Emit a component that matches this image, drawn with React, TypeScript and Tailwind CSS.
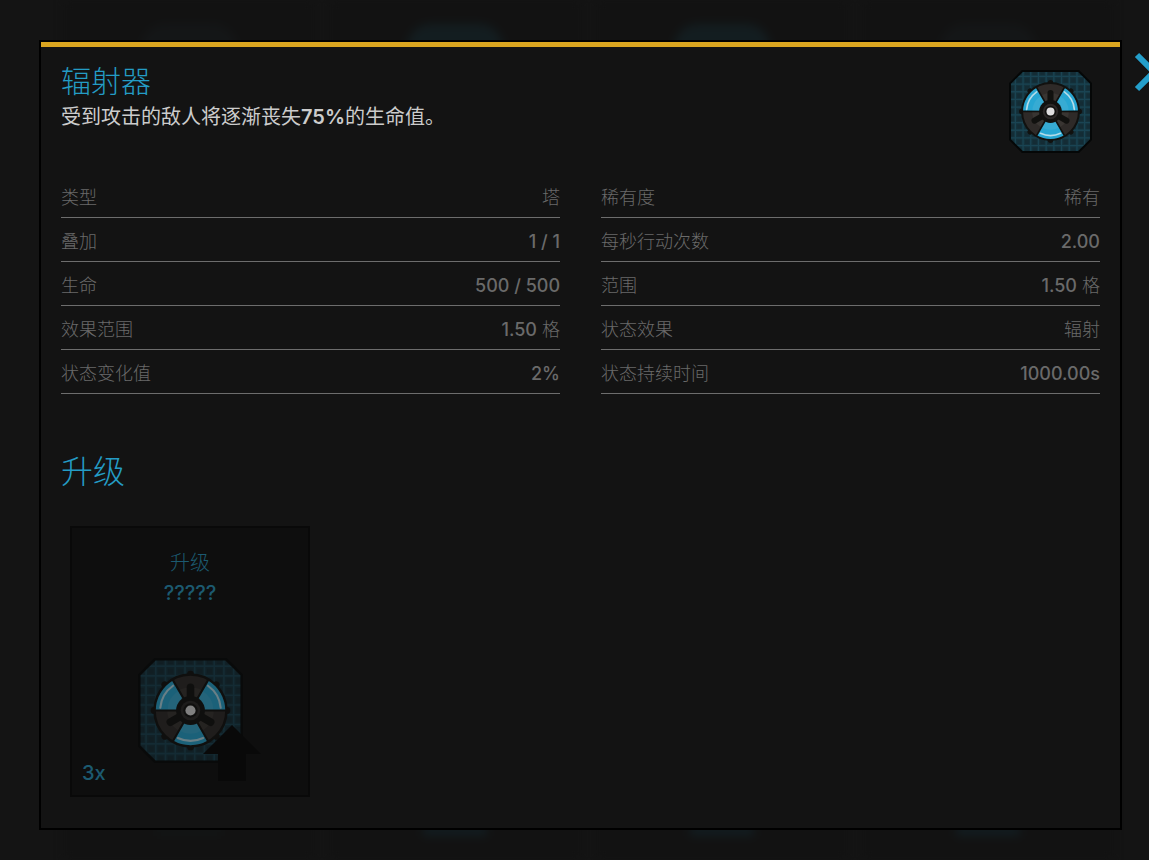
import React, { useId } from 'react';
import clsx from 'clsx';

interface Stat {
  label: string;
  amount?: string;
  text?: string;
}

const STATS: Stat[] = [
  { label: '类型', text: '塔' },
  { label: '稀有度', text: '稀有' },
  { label: '叠加', amount: '1 / 1' },
  { label: '每秒行动次数', amount: '2.00' },
  { label: '生命', amount: '500 / 500' },
  { label: '范围', amount: '1.50', text: '格' },
  { label: '效果范围', amount: '1.50', text: '格' },
  { label: '状态效果', text: '辐射' },
  { label: '状态变化值', amount: '2%' },
  { label: '状态持续时间', amount: '1000.00s' },
];

const GRID_LINES = [-4, 19, 42, 65, 88, 111, 134, 157, 180, 203, 226];
const KNOBS = [0, 45, 90, 135, 180, 225, 270, 315];
const BLADES = [0, 120, 240];

const OCTAGON = 'M40 3H208L245 40V208L208 245H40L3 208V40Z';

const RadiatorIcon: React.FC<{ className?: string }> = ({ className }) => {
  const clipId = useId();

  return (
    <svg viewBox="0 0 248 248" className={className} aria-hidden="true">
      <clipPath id={clipId}>
        <path d={OCTAGON} />
      </clipPath>
      <g clipPath={`url(#${clipId})`}>
        <rect width="248" height="248" fill="#15323c" />
        {GRID_LINES.map((x) =>
          GRID_LINES.map((y) => (
            <rect key={`${x}-${y}`} x={x + 6} y={y + 6} width="12" height="12" fill="#142c35" />
          )),
        )}
        {GRID_LINES.map((p) => (
          <path key={p} d={`M${p} 0V248M0 ${p}H248`} stroke="#1a4453" strokeWidth="4" />
        ))}
      </g>
      <path d={OCTAGON} fill="none" stroke="#050707" strokeWidth="6" />

      {/* Rotor */}
      {KNOBS.map((angle) => (
        <circle key={angle} cx="124" cy="38" r="8" fill="#11110f" transform={`rotate(${angle} 124 124)`} />
      ))}
      <circle cx="124" cy="124" r="85" fill="#2e2a28" stroke="#11110f" strokeWidth="6" />
      <circle cx="124" cy="124" r="55" fill="#393532" />
      {BLADES.map((angle) => (
        <g key={angle} transform={`rotate(${angle} 124 124)`}>
          <path d="M124 124L83 195A82 82 0 0 0 165 195Z" fill="#27a6d2" />
          <path d="M124 124L97 171A54 54 0 0 0 151 171Z" fill="#37abd3" />
          <path d="M124 124L82 197M124 124L166 197" stroke="#11110f" strokeWidth="5" />
          <path d="M94 189A72 72 0 0 0 154 189" fill="none" stroke="#b5dce8" strokeWidth="5" strokeLinecap="round" />
        </g>
      ))}
      {BLADES.map((angle) => (
        <path
          key={angle}
          d="M124 124V69"
          stroke="#11110f"
          strokeWidth="18"
          strokeLinecap="round"
          transform={`rotate(${angle} 124 124)`}
        />
      ))}
      <circle cx="124" cy="124" r="34" fill="#11110f" />
      <circle cx="124" cy="124" r="23" fill="#2b2827" />
      <circle cx="124" cy="124" r="17" fill="#11110f" />
      <circle cx="124" cy="124" r="12" fill="#dedede" />
    </svg>
  );
};

// Blurred inventory grid behind the dialog
const Backdrop: React.FC = () => (
  <div className="absolute inset-0 flex gap-4 overflow-hidden pr-9 pl-16 blur-[5px]" aria-hidden="true">
    {[false, true, true, false].map((bright, i) => (
      <div key={i} className="flex flex-1 flex-col items-center justify-between bg-[#121212] py-6">
        <div
          className={clsx('h-10 w-24 rounded-t-3xl', bright ? 'bg-[#131d20]' : 'bg-[#141617]')}
        />
        <div className={clsx('h-3 w-16', i === 0 ? 'bg-[#121515]' : 'bg-[#121c20]')} />
      </div>
    ))}
  </div>
);

const StatRow: React.FC<{ stat: Stat }> = ({ stat }) => (
  <div className="flex h-11 items-center justify-between border-b border-[#6d6d6d] pt-1 text-[18px]">
    <dt className="font-light text-[#6a6a6a]">{stat.label}</dt>
    <dd className="font-light text-[#6a6a6a]">
      {stat.amount && <span className="font-medium">{stat.amount}</span>}
      {stat.amount && stat.text && ' '}
      {stat.text}
    </dd>
  </div>
);

const UpgradeCard: React.FC = () => (
  <button
    type="button"
    className="relative flex w-60 flex-col items-center border-2 border-[#090909] bg-[#0e0e0e] px-[10px] pt-5 pb-3 text-[20px] text-[#1c5a70]"
  >
    <span className="leading-[30px] font-light">升级</span>
    <span className="leading-[30px] font-medium">?????</span>
    <span className="relative mt-[50px]">
      <RadiatorIcon className="size-[105px] opacity-55" />
      <svg viewBox="0 0 58 56" className="absolute -right-[18px] -bottom-[18px] h-14 w-[58px]" aria-hidden="true">
        <path d="M29 0L58 29H43V56H15V29H0Z" fill="#090909" />
      </svg>
    </span>
    <span className="self-start leading-5 font-medium">3x</span>
  </button>
);

const App: React.FC = () => (
  <div className="relative min-h-screen overflow-hidden bg-[#141414] font-['Inter','Noto_Sans_CJK_SC',sans-serif]" lang="zh-CN">
    <Backdrop />

    <div className="relative flex pt-10 pb-[30px] pl-[39px]">
      <main className="min-w-0 flex-1 border-2 border-black bg-[#131313]">
        <div className="h-[5px] bg-[#daa520]" />

        <div className="px-5 pt-4 pb-[31px]">
          <header className="flex items-start justify-between">
            <div>
              <h1 className="text-[30px] leading-9 font-light text-[#249cc5]">辐射器</h1>
              <p className="mt-1 text-[20px] leading-7 text-[#cccccc]">
                受到攻击的敌人将逐渐丧失<b className="font-semibold">75%</b>的生命值。
              </p>
            </div>
            <RadiatorIcon className="mt-[7px] mr-2 -mb-10 size-[83px] shrink-0" />
          </header>

          <dl className="mt-[43px] grid grid-cols-2 gap-x-[41px]">
            {STATS.map((stat) => (
              <StatRow key={stat.label} stat={stat} />
            ))}
          </dl>

          <h2 className="mt-[58px] text-[32px] leading-10 font-light text-[#249cc5]">升级</h2>
          <div className="mt-[34px] ml-[9px]">
            <UpgradeCard />
          </div>
        </div>
      </main>

      <div className="w-[27px] shrink-0 pt-3 pl-3">
        <button type="button" aria-label="关闭" className="block size-10 text-[#249fcb]">
          <svg viewBox="0 0 40 40" className="size-10" fill="none" stroke="currentColor" strokeWidth="6">
            <path d="M3 3L37 37M37 3L3 37" />
          </svg>
        </button>
      </div>
    </div>
  </div>
);

export default App;
